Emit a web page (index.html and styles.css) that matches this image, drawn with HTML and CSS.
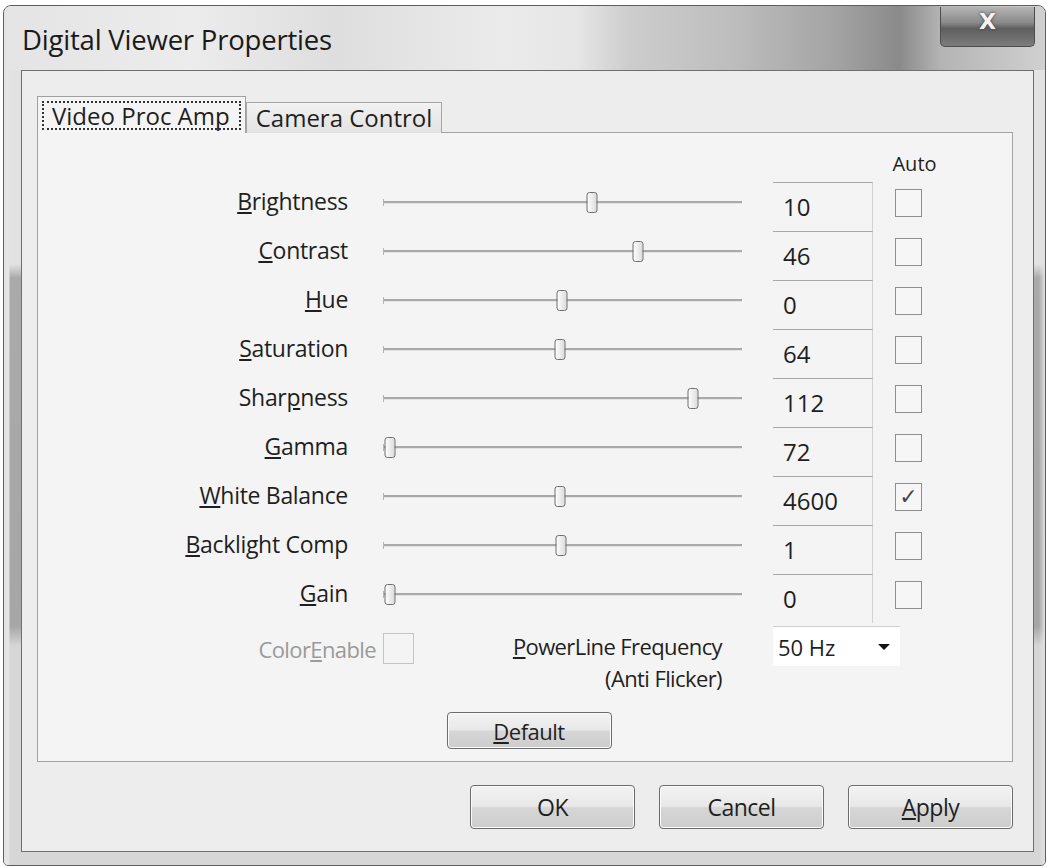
FILE: index.html
```html
<!DOCTYPE html>
<html lang="en">
<head>
    <meta charset="UTF-8">
    <title>Digital Viewer Properties</title>
    <link rel="stylesheet" href="styles.css">
</head>
<body>

<div class="window">
    <div class="titlebar">
        <span class="title">Digital Viewer Properties</span>
        <div class="close">X</div>
    </div>

    <div class="frame">
        <div class="client">
            <div class="tabs">
                <div class="tab active"><span class="focus">Video Proc Amp</span></div>
                <div class="tab">Camera Control</div>
            </div>

            <div class="panel">
                <div class="header">
                    <span class="auto">Auto</span>
                </div>

                <div class="row">
                    <div class="label"><u>B</u>rightness</div>
                    <div class="slider"><div class="thumb" style="left: 58.2%"></div></div>
                    <div class="value">10</div>
                    <div class="check"></div>
                </div>
                <div class="row">
                    <div class="label"><u>C</u>ontrast</div>
                    <div class="slider"><div class="thumb" style="left: 71%"></div></div>
                    <div class="value">46</div>
                    <div class="check"></div>
                </div>
                <div class="row">
                    <div class="label"><u>H</u>ue</div>
                    <div class="slider"><div class="thumb" style="left: 49.9%"></div></div>
                    <div class="value">0</div>
                    <div class="check"></div>
                </div>
                <div class="row">
                    <div class="label"><u>S</u>aturation</div>
                    <div class="slider"><div class="thumb" style="left: 49.3%"></div></div>
                    <div class="value">64</div>
                    <div class="check"></div>
                </div>
                <div class="row">
                    <div class="label">Shar<u>p</u>ness</div>
                    <div class="slider"><div class="thumb" style="left: 86.4%"></div></div>
                    <div class="value">112</div>
                    <div class="check"></div>
                </div>
                <div class="row">
                    <div class="label"><u>G</u>amma</div>
                    <div class="slider"><div class="thumb" style="left: 2%"></div></div>
                    <div class="value">72</div>
                    <div class="check"></div>
                </div>
                <div class="row">
                    <div class="label"><u>W</u>hite Balance</div>
                    <div class="slider"><div class="thumb" style="left: 49.3%"></div></div>
                    <div class="value">4600</div>
                    <div class="check checked">&#10003;</div>
                </div>
                <div class="row">
                    <div class="label"><u>B</u>acklight Comp</div>
                    <div class="slider"><div class="thumb" style="left: 49.6%"></div></div>
                    <div class="value">1</div>
                    <div class="check"></div>
                </div>
                <div class="row">
                    <div class="label"><u>G</u>ain</div>
                    <div class="slider"><div class="thumb" style="left: 2%"></div></div>
                    <div class="value">0</div>
                    <div class="check"></div>
                </div>

                <div class="extras">
                    <div class="color-enable">
                        <span>Color<u>E</u>nable</span>
                        <div class="check disabled"></div>
                    </div>
                    <div class="powerline"><u>P</u>owerLine Frequency<br>(Anti Flicker)</div>
                    <div class="combo">
                        <span>50 Hz</span>
                        <span class="arrow"></span>
                    </div>
                </div>

                <div class="default-row">
                    <button class="btn default"><u>D</u>efault</button>
                </div>
            </div>

            <div class="actions">
                <button class="btn">OK</button>
                <button class="btn">Cancel</button>
                <button class="btn"><u>A</u>pply</button>
            </div>
        </div>
    </div>
</div>

</body>
</html>
```

FILE: styles.css
```css
body {
    margin: 0;
    background-color: #ffffff;
    font-family: "Open Sans", "DejaVu Sans", sans-serif;
    color: #1f1f1f;
}

/* outer glass window */
.window {
    width: 1041px;
    height: 859px;
    margin: 5px 0 0 3px;
    border: 1px solid #5e5e5e;
    border-radius: 8px 8px 5px 5px;
    background: linear-gradient(to bottom, #e2e2e2 0, #e2e2e2 258px, #aaaaaa 272px, #a6a6a6 620px, #d6d6d6 640px, #d6d6d6 100%);
    overflow: hidden;
    display: flex;
    flex-direction: column;
}

.titlebar {
    flex: none;
    height: 64px;
    display: flex;
    align-items: flex-start;
    padding: 0 10px 0 18px;
    background: linear-gradient(to right, #e4e4e4 0%, #ececec 18%, #dedede 32%, #ebebeb 48%, #e6e6e6 55%, #cdcdcd 60%, #bdbdbd 70%, #a3a3a3 80%, #8a8a8a 86%, #b4b4b4 90%, #d0d0d0 100%);
}

.title {
    font-size: 27.5px;
    padding-top: 15px;
    color: #1a1a1a;
    letter-spacing: -0.2px;
}

.close {
    margin-left: auto;
    margin-top: 1px;
    width: 95px;
    height: 40px;
    box-sizing: border-box;
    border: 1px solid #4c4c4c;
    border-top: none;
    border-radius: 0 0 5px 5px;
    background: linear-gradient(to bottom, #b4b4b4 0%, #8a8a8a 40%, #5f5f5f 55%, #7c7c7c 100%);
    color: #f4f4f4;
    font-family: "DejaVu Sans", sans-serif;
    font-weight: bold;
    font-size: 22px;
    text-align: center;
    line-height: 30px;
    text-shadow: 0 0 3px #333;
}

.frame {
    flex: 1;
    min-height: 0;
    padding: 0 11px 13px 17px;
    display: flex;
    background: linear-gradient(to right, #e4e4e4 0, #e4e4e4 5px, transparent 6px, transparent calc(100% - 6px), #e0e0e0 100%);
}

.client {
    flex: 1;
    background-color: #ededed;
    border: 1px solid #6f6f6f;
    padding: 27px 20px 21px 15px;
    display: flex;
    flex-direction: column;
}

/* tabs */
.tabs {
    flex: none;
    display: flex;
    align-items: flex-end;
    height: 35px;
    margin-bottom: -1px;
    position: relative;
    z-index: 1;
}

.tab {
    height: 31px;
    box-sizing: border-box;
    padding: 0 9px;
    font-size: 24px;
    line-height: 30px;
    border: 1px solid #a5a5a5;
    border-bottom: none;
    background: linear-gradient(to bottom, #f2f2f2, #e2e2e2);
}

.tab.active {
    height: 37px;
    padding: 4px 4px 0 4px;
    background-color: #f4f4f4;
    background-image: none;
    border-color: #a0a0a0;
}

.focus {
    display: block;
    height: 29px;
    box-sizing: border-box;
    line-height: 25px;
    padding: 0 9px 0 8px;
    border: 2px dotted #333;
}

.panel {
    flex: none;
    height: 630px;
    box-sizing: border-box;
    border: 1px solid #a3a3a3;
    background-color: #f4f4f4;
    padding-top: 12px;
}

.header {
    height: 37px;
    display: flex;
    align-items: center;
    padding-left: 857px;
}

.auto {
    width: 27px;
    margin-left: 6px;
    display: flex;
    justify-content: center;
    font-size: 20px;
}

/* slider rows */
.row {
    display: flex;
    align-items: center;
    height: 49px;
}

.label {
    width: 310px;
    text-align: right;
    font-size: 23px;
    padding-bottom: 12px;
    letter-spacing: -0.3px;
}

.slider {
    position: relative;
    width: 359px;
    height: 20px;
    margin-left: 35px;
    margin-bottom: 10px;
}

.slider::before {
    content: "";
    position: absolute;
    left: 0;
    right: 0;
    top: 9px;
    height: 2px;
    background-color: #a9a9a9;
    border-bottom: 1px solid #e4e4e4;
}

.slider::after {
    content: "";
    position: absolute;
    left: 0;
    top: 7px;
    width: 1px;
    height: 7px;
    background-color: #b5b5b5;
}

.thumb {
    position: absolute;
    top: 0;
    width: 9px;
    height: 19px;
    transform: translateX(-50%);
    border: 1px solid #6e6e6e;
    border-radius: 3px;
    background: linear-gradient(to right, #fdfdfd, #dcdcdc);
    z-index: 1;
}

.value {
    width: 100px;
    height: 49px;
    margin-left: 31px;
    box-sizing: border-box;
    border-top: 1px solid #a8a8a8;
    border-right: 1px solid #d2d2d2;
    padding-left: 10px;
    font-size: 24px;
    line-height: 47px;
}

.check {
    width: 27px;
    height: 28px;
    margin-left: 22px;
    margin-bottom: 8px;
    box-sizing: border-box;
    border: 1px solid #8e8e8e;
    background-color: #f6f6f6;
    font-family: "DejaVu Sans", sans-serif;
    font-size: 22px;
    font-weight: bold;
    line-height: 26px;
    text-align: center;
    color: #444;
}

/* colour enable, power line and combo */
.extras {
    display: flex;
    align-items: flex-start;
    height: 64px;
    margin-top: 3px;
}

.color-enable {
    width: 376px;
    margin-top: 7px;
    display: flex;
    justify-content: flex-end;
    align-items: center;
    gap: 7px;
    font-size: 22px;
    color: #9a9a9a;
    letter-spacing: -0.6px;
}

.check.disabled {
    width: 31px;
    height: 31px;
    margin: 0;
    border-color: #c4c4c4;
    background-color: #f4f4f4;
}

.powerline {
    width: 308px;
    margin-top: 4px;
    text-align: right;
    font-size: 22px;
    line-height: 32px;
    letter-spacing: -0.6px;
}

.combo {
    width: 127px;
    height: 40px;
    margin-left: 51px;
    box-sizing: border-box;
    border-top: 1px solid #cfcfcf;
    background-color: #ffffff;
    display: flex;
    align-items: center;
    padding: 0 10px 0 5px;
    font-size: 22px;
}

.arrow {
    margin-left: auto;
    width: 0;
    height: 0;
    border-left: 6px solid transparent;
    border-right: 6px solid transparent;
    border-top: 6px solid #111;
}

.default-row {
    display: flex;
    justify-content: center;
    margin-top: 22px;
    padding-left: 8px;
}

/* push buttons */
.btn {
    width: 165px;
    height: 44px;
    border: 1px solid #6c6c6c;
    border-radius: 4px;
    background: linear-gradient(to bottom, #f3f3f3 0%, #e8e8e8 48%, #d6d6d6 52%, #cdcdcd 100%);
    box-shadow: inset 0 0 0 1px #fbfbfb;
    font-family: "Open Sans", "DejaVu Sans", sans-serif;
    font-size: 23px;
    color: #1f1f1f;
    letter-spacing: -0.5px;
    padding: 0;
}

.btn.default {
    height: 37px;
    font-size: 22px;
}

.actions {
    flex: none;
    display: flex;
    justify-content: flex-end;
    gap: 24px;
    margin-top: 23px;
}
```
